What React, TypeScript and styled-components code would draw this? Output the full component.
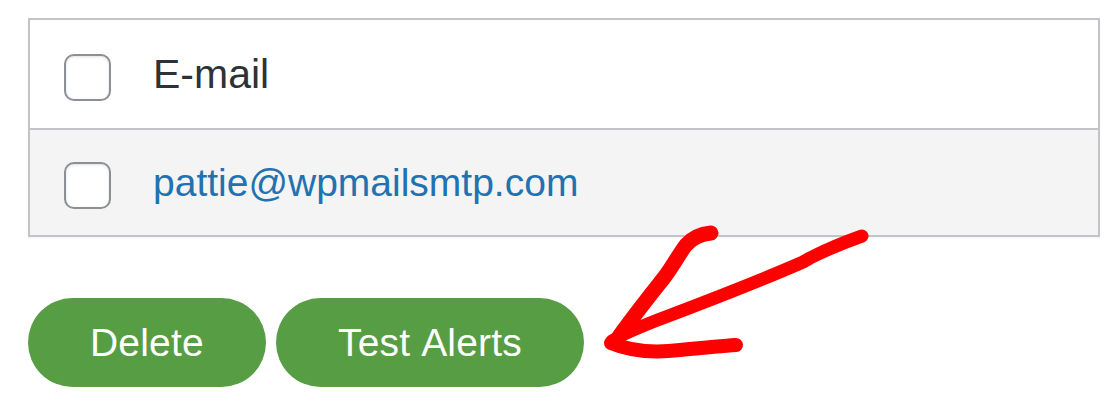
import styled, { createGlobalStyle } from "styled-components";

const GlobalStyle = createGlobalStyle`
  body {
    margin: 0;
    background: #ffffff;
    font-family: "Liberation Sans", Arial, sans-serif;
  }
`;

const Page = styled.div`
  position: relative;
  width: 1116px;
  height: 416px;
  padding: 18px 0 0 28px;
  box-sizing: border-box;
  overflow: hidden;
`;

const Table = styled.div`
  width: 1072px;
  border: 2px solid #c3c4c7;
  box-sizing: border-box;
  box-shadow: 0 1px 2px rgba(0, 0, 0, 0.05);
`;

const Row = styled.div<{ $striped?: boolean; $height: number }>`
  display: flex;
  align-items: center;
  height: ${(p) => p.$height}px;
  padding-left: 34px;
  background: ${(p) => (p.$striped ? "#f4f4f4" : "#ffffff")};
  & + & {
    border-top: 2px solid #c3c4c7;
  }
`;

const Checkbox = styled.span`
  width: 47px;
  height: 47px;
  margin-top: 6px;
  box-sizing: border-box;
  border: 2px solid #8c8f94;
  border-radius: 10px;
  background: #ffffff;
  box-shadow: inset 0 1px 3px rgba(0, 0, 0, 0.12);
  flex: 0 0 auto;
`;

const Label = styled.span`
  margin-left: 42px;
  font-size: 41px;
  color: #2c3338;
`;

const EmailLink = styled.a`
  margin-left: 42px;
  font-size: 39px;
  color: #2271b1;
  text-decoration: none;
`;

const Actions = styled.div`
  display: flex;
  gap: 10px;
  margin-top: 61px;
`;

const Button = styled.button`
  height: 89px;
  padding: 0 62px;
  border: none;
  border-radius: 45px;
  background: #569d43;
  color: #ffffff;
  font-family: "Liberation Sans", Arial, sans-serif;
  font-size: 39px;
  letter-spacing: 0.2px;
  word-spacing: 2px;
  cursor: pointer;
`;

const Arrow = styled.svg`
  position: absolute;
  left: 590px;
  top: 220px;
  width: 290px;
  height: 150px;
  pointer-events: none;
`;

const App = () => {
  return (
    <Page>
      <GlobalStyle />
      <Table>
        <Row $height={108}>
          <Checkbox />
          <Label>E-mail</Label>
        </Row>
        <Row $striped $height={105}>
          <Checkbox />
          <EmailLink href="#">pattie@wpmailsmtp.com</EmailLink>
        </Row>
      </Table>
      <Actions>
        <Button>Delete</Button>
        <Button>Test Alerts</Button>
      </Actions>
      {/* hand-drawn annotation arrow */}
      <Arrow viewBox="590 220 290 150">
        <g fill="none" stroke="#ff0000" strokeLinecap="round" strokeLinejoin="round">
          <path
            d="M618 338 C632 318 648 298 663 279 C673 266 679 254 686 245 C693 237 701 234 711 233"
            strokeWidth="15"
          />
          <path
            d="M862 236 C845 242 826 250 810 258 L803 262 C760 281 700 304 655 321 C635 329 620 335 612 341"
            strokeWidth="13"
          />
          <path
            d="M611 343 C630 351 655 353 680 350 C700 348 720 346 736 345"
            strokeWidth="14"
          />
        </g>
      </Arrow>
    </Page>
  );
};

export default App;
